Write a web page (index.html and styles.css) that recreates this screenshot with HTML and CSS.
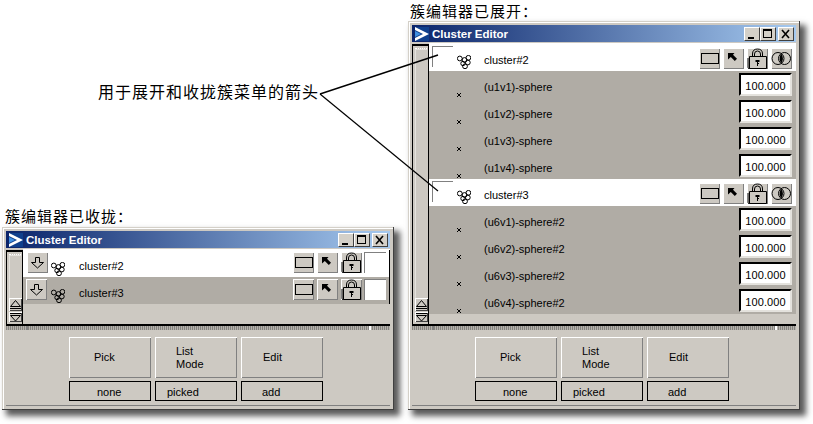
FILE: index.html
```html
<!DOCTYPE html>
<html lang="zh-CN">

<head>
    <meta charset="UTF-8">
    <title>Cluster Editor</title>
    <link rel="stylesheet" href="styles.css">
</head>

<body>
    <svg class="defs" width="0" height="0">
        <symbol id="i-logo" viewBox="0 0 14 14">
            <rect width="14" height="14" fill="#0f3f8c" />
            <path d="M0 0 L14 7 L0 14 L0 11 L8 7 L0 3 Z" fill="#fff" />
            <path d="M0 4 L6 7 L0 10 Z" fill="#3f8fe0" />
        </symbol>
        <symbol id="i-min" viewBox="0 0 16 14">
            <rect x="4" y="10" width="6" height="2" fill="#000" />
        </symbol>
        <symbol id="i-max" viewBox="0 0 16 14">
            <path d="M3 2 H12 V11 H3 Z M4 4 V10 H11 V4 Z" fill="#000" fill-rule="evenodd" />
        </symbol>
        <symbol id="i-close" viewBox="0 0 16 14">
            <path d="M4 3 L11 11 M11 3 L4 11" stroke="#000" stroke-width="1.6" fill="none" />
        </symbol>
        <symbol id="i-down" viewBox="0 0 21 21">
            <path d="M8.5 5.5 H12.5 V10.5 H16.5 L10.5 16 L4.5 10.5 H8.5 Z" fill="none" stroke="#000" />
        </symbol>
        <symbol id="i-cluster" viewBox="0 0 14 14">
            <g fill="none" stroke="#000">
                <circle cx="2.8" cy="3.5" r="2.4" />
                <circle cx="7.5" cy="5" r="2.4" />
                <circle cx="11.4" cy="2.8" r="2.4" />
                <circle cx="10.8" cy="7.5" r="2.4" />
                <circle cx="6" cy="8.5" r="2.2" />
                <circle cx="8" cy="11.3" r="2.4" />
            </g>
        </symbol>
        <symbol id="i-rect" viewBox="0 0 21 21">
            <rect x="2.5" y="5.5" width="17" height="10" fill="none" stroke="#000" />
        </symbol>
        <symbol id="i-pick" viewBox="0 0 21 21">
            <path d="M5 5 H11.5 L10 6.8 L14 10.8 L11.8 13 L7.8 9 L5 11.5 Z" fill="#000" />
        </symbol>
        <symbol id="i-lock" viewBox="0 0 21 21">
            <g fill="none" stroke="#000">
                <path d="M5.5 9 V6 Q5.5 1 10.5 1 Q15.5 1 15.5 6 V9" />
                <path d="M7.5 9 V6 Q7.5 3 10.5 3 Q13.5 3 13.5 6 V9" />
                <path d="M2.5 8.5 H19.5 V20.5 H2.5 Z" />
                <path d="M1 10 V19.5 Q1 20.5 2.5 20.5" />
            </g>
            <path d="M8.5 12 H12.5 V14 H11 V15 H12 V16 H11 V18 H10 V14 H8.5 Z" fill="#000" />
        </symbol>
        <symbol id="i-mix" viewBox="0 0 21 21">
            <g fill="none" stroke="#000">
                <circle cx="7" cy="10.5" r="6" />
                <circle cx="13.5" cy="10.5" r="6" />
            </g>
            <path d="M10.25 5.5 Q13.5 10.5 10.25 15.5 Q7 10.5 10.25 5.5 Z" fill="#000" />
        </symbol>
        <symbol id="i-x" viewBox="0 0 4 4">
            <path d="M0 0 H1 V1 H0 Z M3 0 H4 V1 H3 Z M1 1 H3 V3 H1 Z M0 3 H1 V4 H0 Z M3 3 H4 V4 H3 Z" fill="#000" />
        </symbol>
        <symbol id="i-up" viewBox="0 0 13 13">
            <path d="M6.5 2.5 L11.5 8.5 H1.5 Z" fill="none" stroke="#000" />
            <rect x="1" y="10" width="11" height="1" fill="#000" />
        </symbol>
        <symbol id="i-dn" viewBox="0 0 13 10">
            <rect x="1" y="1" width="11" height="1" fill="#000" />
            <path d="M1.5 3.5 H11.5 L6.5 9 Z" fill="none" stroke="#000" />
        </symbol>
    </svg>

    <p class="caption caption-closed">簇编辑器已收拢：</p>
    <p class="caption caption-open">簇编辑器已展开：</p>
    <p class="caption caption-callout">用于展开和收拢簇菜单的箭头</p>

    <!-- collapsed window -->
    <div class="win win-closed">
        <div class="title">
            <svg class="logo"><use href="#i-logo" /></svg>
            <span class="title-text">Cluster Editor</span>
            <span class="wbtn"><svg><use href="#i-min" /></svg></span>
            <span class="wbtn"><svg><use href="#i-max" /></svg></span>
            <span class="wbtn wbtn-close"><svg><use href="#i-close" /></svg></span>
        </div>
        <div class="client">
            <div class="scroll">
                <div class="thumb"></div>
                <div class="sbtn sbtn-up"><svg><use href="#i-up" /></svg></div>
                <div class="sbtn sbtn-dn"><svg><use href="#i-dn" /></svg></div>
            </div>
            <div class="list">
                <div class="row row-cluster">
                    <div class="toggle"><span class="btn"><svg><use href="#i-down" /></svg></span></div>
                    <svg class="node"><use href="#i-cluster" /></svg>
                    <span class="label">cluster#2</span>
                    <div class="tools">
                        <span class="btn"><svg><use href="#i-rect" /></svg></span>
                        <span class="btn"><svg><use href="#i-pick" /></svg></span>
                        <span class="btn"><svg><use href="#i-lock" /></svg></span>
                        <span class="blank"></span>
                    </div>
                </div>
                <div class="row">
                    <div class="toggle"><span class="btn btn-shift"><svg><use href="#i-down" /></svg></span></div>
                    <svg class="node"><use href="#i-cluster" /></svg>
                    <span class="label">cluster#3</span>
                    <div class="tools">
                        <span class="btn"><svg><use href="#i-rect" /></svg></span>
                        <span class="btn"><svg><use href="#i-pick" /></svg></span>
                        <span class="btn"><svg><use href="#i-lock" /></svg></span>
                        <span class="blank"></span>
                    </div>
                </div>
            </div>
        </div>
        <div class="sash"><i class="sash-dark"></i><i class="sash-mark"></i></div>
        <div class="actions">
            <div class="action action-pick">Pick</div>
            <div class="action action-list">List<br>Mode</div>
            <div class="action action-edit">Edit</div>
            <div class="status status-none">none</div>
            <div class="status status-picked">picked</div>
            <div class="status status-add">add</div>
        </div>
    </div>

    <!-- expanded window -->
    <div class="win win-open">
        <div class="title">
            <svg class="logo"><use href="#i-logo" /></svg>
            <span class="title-text">Cluster Editor</span>
            <span class="wbtn"><svg><use href="#i-min" /></svg></span>
            <span class="wbtn"><svg><use href="#i-max" /></svg></span>
            <span class="wbtn wbtn-close"><svg><use href="#i-close" /></svg></span>
        </div>
        <div class="client">
            <div class="scroll">
                <div class="thumb"></div>
                <div class="sbtn sbtn-up"><svg><use href="#i-up" /></svg></div>
                <div class="sbtn sbtn-dn"><svg><use href="#i-dn" /></svg></div>
            </div>
            <div class="list">
                <div class="row row-cluster">
                    <div class="toggle"><span class="corner"></span></div>
                    <svg class="node"><use href="#i-cluster" /></svg>
                    <span class="label">cluster#2</span>
                    <div class="tools">
                        <span class="btn"><svg><use href="#i-rect" /></svg></span>
                        <span class="btn"><svg><use href="#i-pick" /></svg></span>
                        <span class="btn"><svg><use href="#i-lock" /></svg></span>
                        <span class="btn"><svg><use href="#i-mix" /></svg></span>
                    </div>
                </div>
                <div class="row">
                    <div class="toggle"></div>
                    <svg class="mark"><use href="#i-x" /></svg>
                    <span class="label">(u1v1)-sphere</span>
                    <span class="num">100.000</span>
                </div>
                <div class="row">
                    <div class="toggle"></div>
                    <svg class="mark"><use href="#i-x" /></svg>
                    <span class="label">(u1v2)-sphere</span>
                    <span class="num">100.000</span>
                </div>
                <div class="row">
                    <div class="toggle"></div>
                    <svg class="mark"><use href="#i-x" /></svg>
                    <span class="label">(u1v3)-sphere</span>
                    <span class="num">100.000</span>
                </div>
                <div class="row">
                    <div class="toggle"></div>
                    <svg class="mark"><use href="#i-x" /></svg>
                    <span class="label">(u1v4)-sphere</span>
                    <span class="num">100.000</span>
                </div>
                <div class="row row-cluster">
                    <div class="toggle"><span class="corner"></span></div>
                    <svg class="node"><use href="#i-cluster" /></svg>
                    <span class="label">cluster#3</span>
                    <div class="tools">
                        <span class="btn"><svg><use href="#i-rect" /></svg></span>
                        <span class="btn"><svg><use href="#i-pick" /></svg></span>
                        <span class="btn"><svg><use href="#i-lock" /></svg></span>
                        <span class="btn"><svg><use href="#i-mix" /></svg></span>
                    </div>
                </div>
                <div class="row">
                    <div class="toggle"></div>
                    <svg class="mark"><use href="#i-x" /></svg>
                    <span class="label">(u6v1)-sphere#2</span>
                    <span class="num">100.000</span>
                </div>
                <div class="row">
                    <div class="toggle"></div>
                    <svg class="mark"><use href="#i-x" /></svg>
                    <span class="label">(u6v2)-sphere#2</span>
                    <span class="num">100.000</span>
                </div>
                <div class="row">
                    <div class="toggle"></div>
                    <svg class="mark"><use href="#i-x" /></svg>
                    <span class="label">(u6v3)-sphere#2</span>
                    <span class="num">100.000</span>
                </div>
                <div class="row">
                    <div class="toggle"></div>
                    <svg class="mark"><use href="#i-x" /></svg>
                    <span class="label">(u6v4)-sphere#2</span>
                    <span class="num">100.000</span>
                </div>
            </div>
        </div>
        <div class="sash"><i class="sash-dark"></i><i class="sash-mark"></i></div>
        <div class="actions">
            <div class="action action-pick">Pick</div>
            <div class="action action-list">List<br>Mode</div>
            <div class="action action-edit">Edit</div>
            <div class="status status-none">none</div>
            <div class="status status-picked">picked</div>
            <div class="status status-add">add</div>
        </div>
    </div>

    <!-- callout lines -->
    <svg class="callout" width="813" height="424">
        <line x1="320" y1="94" x2="438" y2="55" stroke="#000" stroke-width="1.4" />
        <line x1="320" y1="94" x2="438" y2="191" stroke="#000" stroke-width="1.2" />
    </svg>
</body>

</html>
```
FILE: styles.css
```css
body {
    margin: 0;
    background-color: #fff;
    font-family: "Liberation Sans", sans-serif;
    font-size: 11px;
    color: #000;
}

.defs {
    position: absolute;
}

svg {
    display: block;
}

.caption {
    position: absolute;
    margin: 0;
    font-family: "Noto Sans CJK SC", sans-serif;
    font-size: 15px;
    line-height: 20px;
    letter-spacing: 1px;
    white-space: nowrap;
}

.caption-closed {
    left: 5px;
    top: 206px;
}

.caption-open {
    left: 410px;
    top: 1px;
}

.caption-callout {
    left: 98px;
    top: 81px;
    font-size: 16px;
}

.callout {
    position: absolute;
    left: 0;
    top: 0;
    pointer-events: none;
}

/* windows */
.win {
    position: absolute;
    box-sizing: border-box;
    width: 392px;
    padding: 4px;
    display: flex;
    flex-direction: column;
    background-color: #cdc9c2;
    box-shadow: inset -1px -1px #404040, inset 1px 1px #d4d0c8, inset 2px 2px #fff, 5px 5px 6px 1px rgba(0, 0, 0, 0.65);
}

.win-closed {
    left: 2px;
    top: 227px;
    height: 183px;
}

.win-open {
    left: 408px;
    top: 21px;
    height: 389px;
}

.title {
    display: flex;
    align-items: center;
    height: 17px;
    margin-bottom: 1px;
    padding: 0 2px 0 3px;
    background: linear-gradient(to right, #0a246a, #a6caf0);
}

.logo {
    width: 14px;
    height: 14px;
}

.title-text {
    flex: 1;
    margin-left: 3px;
    color: #fff;
    font-weight: bold;
    font-size: 11.5px;
}

.wbtn {
    box-sizing: border-box;
    width: 16px;
    height: 14px;
    background-color: #d4d0c8;
    border: 1px solid;
    border-color: #fff #404040 #404040 #fff;
}

.wbtn svg {
    width: 16px;
    height: 14px;
    margin: -1px;
}

.wbtn-close {
    margin-left: 2px;
}

/* list area */
.client {
    flex: 1;
    min-height: 0;
    display: flex;
    border-bottom: 2px solid #000;
}

.scroll {
    box-sizing: border-box;
    width: 17px;
    margin-top: 1px;
    padding: 2px 1px 1px 2px;
    display: flex;
    flex-direction: column;
    border: 2px solid #000;
    border-bottom: 0;
    border-right-width: 1px;
    border-left-width: 1px;
}

.thumb {
    flex: 1;
    background-color: #cdc9c2;
    border-top: 1px dotted #fff;
    box-shadow: inset 1px 1px #e4e2dd;
}

.sbtn {
    width: 13px;
    background-color: #cdc9c2;
    box-shadow: inset 1px 1px #fff, inset -1px -1px #404040;
}

.sbtn svg {
    width: 13px;
    height: 100%;
}

.sbtn-up {
    height: 13px;
}

.sbtn-dn {
    height: 10px;
    margin-top: 1px;
    margin-bottom: 1px;
}

.list {
    flex: 1;
    border-top: 1px solid #fff;
}

.row {
    box-sizing: border-box;
    height: 27px;
    padding-top: 2px;
    display: flex;
    align-items: flex-start;
    background-color: #b0aca5;
}

.row-cluster {
    background-color: #fff;
}

.win-closed .row {
    border-right: 1px solid #000;
}

.toggle {
    box-sizing: border-box;
    width: 28px;
    height: 21px;
    flex: none;
    padding-left: 4px;
}

.win-open .toggle {
    padding-left: 3px;
}

.corner {
    display: block;
    box-sizing: border-box;
    width: 21px;
    height: 21px;
    border-top: 1px solid #808080;
    border-left: 1px solid #808080;
}

.btn {
    display: block;
    box-sizing: border-box;
    width: 21px;
    height: 21px;
    flex: none;
    background-color: #cdc9c2;
    box-shadow: inset 1px 1px #fff, inset -1px -1px #808080;
}

.btn svg {
    width: 21px;
    height: 21px;
}

.btn-shift {
    margin-left: -1px;
}

.node {
    width: 14px;
    height: 14px;
    flex: none;
    margin-top: 10px;
    margin-right: 14px;
}

.win-open .node {
    margin-top: 9px;
    margin-right: 13px;
}

.mark {
    width: 4px;
    height: 4px;
    flex: none;
    margin-top: 20px;
    margin-right: 23px;
}

.label {
    flex: 1;
    margin-top: 7px;
    line-height: 14px;
    white-space: nowrap;
}

.tools {
    display: flex;
    gap: 3px;
    padding-right: 3px;
}

.win-open .tools {
    margin-top: 2px;
    padding-right: 4px;
}

.blank {
    box-sizing: border-box;
    width: 22px;
    height: 21px;
    margin-left: -1px;
    background-color: #fff;
    border-top: 1px solid #808080;
    border-left: 1px solid #808080;
}

.num {
    box-sizing: border-box;
    width: 53px;
    height: 23px;
    margin-right: 4px;
    background-color: #fff;
    border: 2px solid;
    border-color: #000 #e4e2dd #e4e2dd #000;
    text-align: center;
    font-size: 11px;
    letter-spacing: 0.1px;
    line-height: 22px;
}

/* sash */
.sash {
    position: relative;
    height: 4px;
    background: repeating-linear-gradient(to right, #85837f 0 1px, #b5b2ac 1px 2px);
}

.sash-dark,
.sash-mark {
    position: absolute;
    top: 0;
    width: 2px;
    height: 4px;
}

.sash-dark {
    left: 20px;
    background-color: #808080;
}

.sash-mark {
    right: 19px;
    background-color: #fff;
}

/* bottom buttons */
.actions {
    display: grid;
    grid-template-columns: repeat(3, 82px);
    grid-template-rows: 41px 20px;
    gap: 3px 4px;
    margin-top: 7px;
    padding: 0 0 4px 63px;
    border-bottom: 1px solid #808080;
}

.action {
    box-sizing: border-box;
    display: flex;
    align-items: center;
    line-height: 13px;
    background-color: #cdc9c2;
    box-shadow: inset 1px 1px #fff, inset -1px -1px #808080;
}

.action-pick {
    padding-left: 25px;
}

.action-list {
    padding-left: 21px;
}

.action-edit {
    padding-left: 22px;
}

.status {
    box-sizing: border-box;
    border: 1px solid #000;
    line-height: 20px;
}

.status-none {
    padding-left: 27px;
}

.status-picked {
    padding-left: 11px;
}

.status-add {
    padding-left: 20px;
}
```
